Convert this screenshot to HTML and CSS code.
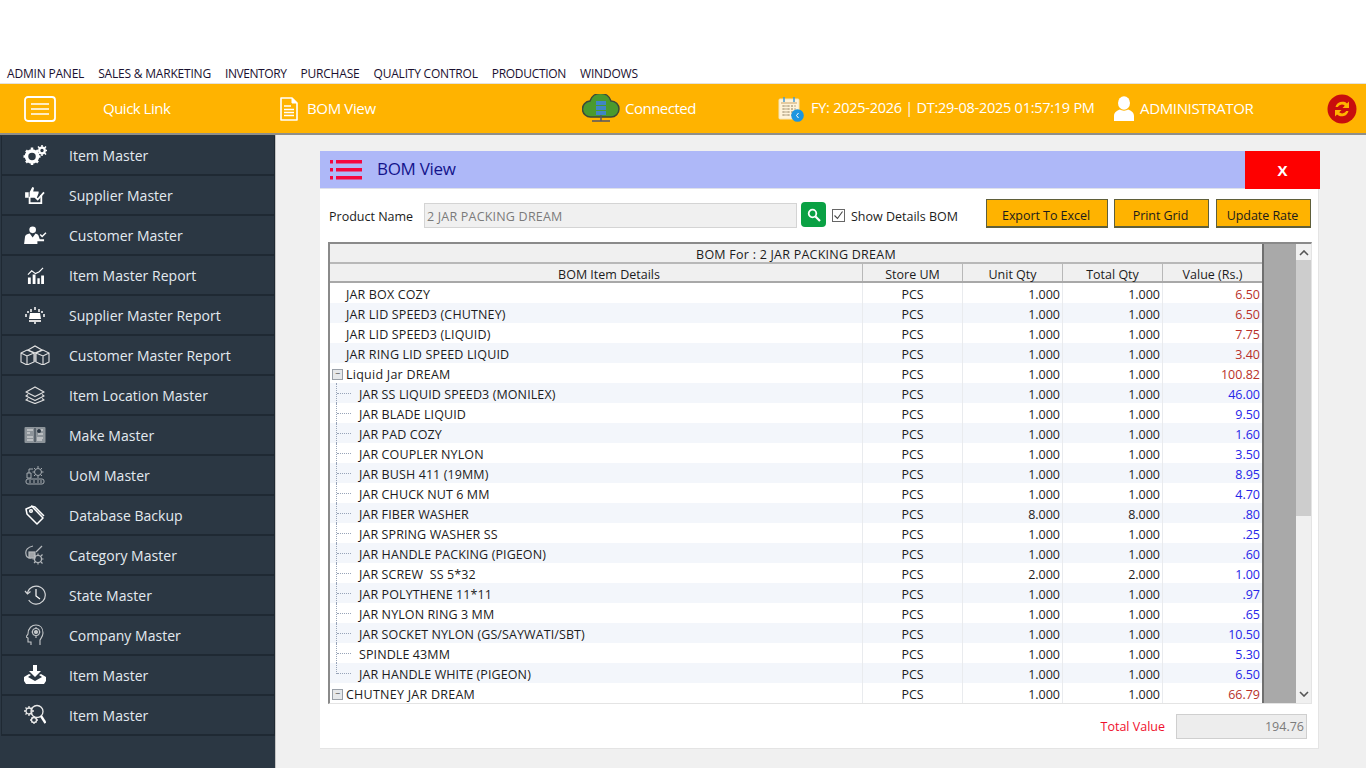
FILE: index.html
```html
<!DOCTYPE html>
<html lang="en">
<head>
<meta charset="utf-8">
<title>BOM View</title>
<link rel="stylesheet" href="styles.css">
</head>
<body>
<div class="top-space"></div>
<nav class="menubar">
  <span>ADMIN PANEL</span><span>SALES &amp; MARKETING</span><span class="m-inv">INVENTORY</span><span>PURCHASE</span><span>QUALITY CONTROL</span><span class="m-prod">PRODUCTION</span><span>WINDOWS</span>
</nav>
<header class="appbar">
  <div class="ab ab-menu">
    <svg class="i-menu" viewBox="0 0 32 26" width="32" height="26"><rect x="1" y="1" width="30" height="24" rx="3" fill="none" stroke="#fff" stroke-width="1.800"/><path d="M7 8h18M7 13h18M7 18h18" stroke="#fff" stroke-width="1.500"/></svg>
  </div>
  <div class="ab ab-quick"><span>Quick Link</span></div>
  <div class="ab ab-view">
    <svg viewBox="0 0 18 24" width="18" height="24"><path d="M1 1h11l5 5v17H1z" fill="none" stroke="#fff" stroke-width="1.600" stroke-linejoin="round"/><path d="M12 1v5h5" fill="#fff" stroke="#fff"/><path d="M4 9h7M4 12.500h10M4 15.500h10M4 18.500h10" stroke="#fff" stroke-width="1.500"/></svg>
    <span>BOM View</span>
  </div>
  <div class="ab ab-conn">
    <svg viewBox="0 0 38 30" width="38" height="30"><path d="M9 23a8 8 0 0 1-1-16 11 11 0 0 1 21 0 8 8 0 0 1 0 16z" fill="#4a9a2e" stroke="#3c4a38" stroke-width="1.500"/><rect x="14" y="7" width="10" height="4" fill="#3f86c6"/><rect x="14" y="12" width="10" height="4" fill="#3f86c6"/><rect x="14" y="17" width="10" height="4" fill="#3f86c6"/><path d="M19 21v6M10 27h18" stroke="#556" stroke-width="1.500"/></svg>
    <span>Connected</span>
  </div>
  <div class="ab ab-fy">
    <svg viewBox="0 0 26 26" width="26" height="26"><rect x="1" y="3" width="20" height="20" rx="1" fill="#fff3d8" stroke="#f3e3b8"/><path d="M6 1v5M16 1v5" stroke="#3f9ad8" stroke-width="1.500"/><path d="M3 7h16" stroke="#c9a36b" stroke-width="1"/><path d="M4 10h14M4 13h14M4 16h14M4 19h14M6 9v12M10 9v12M14 9v12" stroke="#b9a98a" stroke-width="1.200" stroke-dasharray="2 1"/><circle cx="19.500" cy="19.500" r="6.300" fill="#1d96e0"/><path d="M20.500 17l-2 2.500 2 2.500" stroke="#fff" fill="none"/></svg>
    <span>FY: 2025-2026 | DT:29-08-2025 01:57:19 PM</span>
  </div>
  <div class="ab ab-user">
    <svg viewBox="0 0 20 25" width="20" height="25"><ellipse cx="10" cy="7" rx="6" ry="6.800" fill="#fff"/><path d="M0 25v-5c0-4 4-6 6-6.500 2 1.500 6 1.500 8 0 2 .5 6 2.500 6 6.500v5z" fill="#fff"/></svg>
    <span>ADMINISTRATOR</span>
  </div>
  <div class="ab ab-refresh">
    <svg viewBox="0 0 30 30" width="30" height="30"><circle cx="15" cy="15" r="14.500" fill="#c80d0d"/><path d="M8.500 13a7 7 0 0 1 11.500-3.500l2-2v6.500h-6.500l2.300-2.300a4.500 4.500 0 0 0-7 1.300zM21.500 17a7 7 0 0 1-11.500 3.500l-2 2V16h6.500l-2.300 2.300a4.500 4.500 0 0 0 7-1.300z" fill="#ffb300"/></svg>
  </div>
</header>
<div class="body">
  <aside class="side">
    <a class="si"><span class="sic"><svg viewBox="0 0 24 20" width="24" height="20"><circle cx="9" cy="11.500" r="5.500" fill="none" stroke="#fff" stroke-width="3.500"/><path d="M9 2.500v3M9 17.500v3M.5 11.500h3M14.500 11.500h3M3 5.500l2 2M13 15.500l2 2M3 17.500l2-2M13 7.500l2-2" stroke="#fff" stroke-width="2.500"/><circle cx="19" cy="5.500" r="2.800" fill="none" stroke="#fff" stroke-width="2.200"/><path d="M19 0v2M19 9v2M13.500 5.500h2M22.500 5.500h1.500M15 1.500l1.500 1.500M21.500 8l1.500 1.500M15 9.500L16.500 8M21.500 3L23 1.500" stroke="#fff" stroke-width="1.500"/></svg></span>Item Master</a>
    <a class="si"><span class="sic"><svg viewBox="0 0 22 20" width="20" height="18"><path d="M0 7h4v6H0zM5 7l3-6 2 1-1 4h6v2l-2 5H5z" fill="#fff"/><path d="M5 12v7h13l0-9" fill="none" stroke="#fff" stroke-width="2"/><path d="M11 12l3 3 7-8" fill="none" stroke="#fff" stroke-width="2"/></svg></span>Supplier Master</a>
    <a class="si"><span class="sic"><svg viewBox="0 0 24 20" width="23" height="19"><circle cx="9" cy="4" r="3.500" fill="#fff"/><path d="M0 19l1-8c.5-2 4-3 5-3l3 4 3-4c2 .5 3 1 3.500 3l1 3H21v2h-7v3z" fill="#fff"/><path d="M17 9l2 2 4-4" stroke="#fff" stroke-width="1.500" fill="none"/></svg></span>Customer Master</a>
    <a class="si"><span class="sic"><svg viewBox="0 0 18 18" width="17" height="17"><path d="M1 11h3v7H1zM6 8h3v10H6zM11 12h2.500v6H11zM15 9h3v9h-3z" fill="#fff"/><path d="M1 8l4-4 4 3 4-2 4-4" fill="none" stroke="#fff" stroke-width="1.200"/></svg></span>Item Master Report</a>
    <a class="si"><span class="sic"><svg viewBox="0 0 20 18" width="20" height="18"><path d="M5 7h10l1 6H4z" fill="#fff"/><path d="M4 14h12v2H4z" fill="#ddd"/><path d="M10 1v3M6 3v3M14 3v3M1 8v3M19 8v3M10 16v2" stroke="#fff" stroke-width="1.500"/><circle cx="3" cy="6" r="1" fill="#fff"/><circle cx="17" cy="6" r="1" fill="#fff"/></svg></span>Supplier Master Report</a>
    <a class="si"><span class="sic"><svg viewBox="0 0 30 20" width="30" height="20" fill="none" stroke="#e4e4e4" stroke-width="1.100"><path d="M1 8l6-3 7 3v9l-7 3-6-3zM1 8l6 3 7-3M7 11v9"/><path d="M16 8l7-3 6 3v9l-6 3-7-3zM16 8l7 3 6-3M23 11v9"/><path d="M8 5l7-4 7 4-7 3zM15 8v9"/></svg></span>Customer Master Report</a>
    <a class="si"><span class="sic"><svg viewBox="0 0 20 18" width="20" height="18" fill="none" stroke="#ddd" stroke-width="1.300" stroke-linejoin="round"><path d="M10 1l9 5-9 4.500L1 6zM3 8.500L1 10l9 4.500 9-4.500-2-1.500M3 12.500L1 14l9 3.500 9-3.500-2-1.500"/></svg></span>Item Location Master</a>
    <a class="si"><span class="sic"><svg viewBox="0 0 22 18" width="22" height="18"><rect x=".5" y="1" width="21" height="16" rx="1" fill="#8d949a"/><path d="M11 2v14" stroke="#2b3743"/><path d="M3 4h6M3 7h3M13 4h6M14 8h5M3 11h6M3 14h6M13 12h6M13 14h5" stroke="#e8e8e8"/><circle cx="15" cy="5" r="2" fill="#2b3743"/></svg></span>Make Master</a>
    <a class="si"><span class="sic"><svg viewBox="0 0 20 20" width="20" height="20" fill="none" stroke="#a5abb0"><circle cx="13" cy="7" r="3.500"/><path d="M13 1v2M13 11v2M7.500 7h2M16.500 7h2M9 3l1.500 1.500M15.500 9.500L17 11M9 11l1.500-1.500M15.500 4.500L17 3"/><path d="M2 8h4v5H2zM4 8V4h4"/><rect x="1" y="14" width="18" height="5" rx="2"/><path d="M5 15v3M9 15v3M13 15v3M16 15v3"/></svg></span>UoM Master</a>
    <a class="si"><span class="sic"><svg viewBox="0 0 20 20" width="20" height="20" fill="none" stroke="#fff" stroke-width="1.500" stroke-linejoin="round"><path d="M1 4l6-2.500 11 11.500-6 6L2 9z"/><circle cx="6" cy="6" r="1.300"/><path d="M6 1l4 1 9 9"/></svg></span>Database Backup</a>
    <a class="si"><span class="sic"><svg viewBox="0 0 20 20" width="20" height="20" fill="none" stroke="#b5b9bd" stroke-width="1.200"><path d="M8 1C3 2 0 5 1 9c0 3 2 4 5 4"/><rect x="4" y="7" width="6" height="6" fill="#a0a4a8"/><circle cx="13" cy="14" r="3.500"/><path d="M13 8.500v2M13 17.500v2M7.500 14h2M16.500 14h2M9 10l1.500 1.500M16 17l1.500 1.500M9 18l1.500-1.500M16 11l1.500-1.500"/><path d="M11 7l6-6"/></svg></span>Category Master</a>
    <a class="si"><span class="sic"><svg viewBox="0 0 22 22" width="22" height="22" fill="none" stroke="#d4d6d8" stroke-width="1.200"><path d="M3.500 9a9 9 0 1 1 1.200 7"/><path d="M1 7l2.500 3L6.500 7.500"/><path d="M12 5v7l4 3" stroke="#fff"/></svg></span>State Master</a>
    <a class="si"><span class="sic"><svg viewBox="0 0 18 22" width="18" height="22" fill="none" stroke="#c5c8ca" stroke-width="1.100"><path d="M5 21v-3H2v-4l-2-1 2-3C2 4 6 1 10 1s7 3 7 8c0 3-2 5-3 7v5"/><circle cx="10" cy="8" r="3.500"/><circle cx="10" cy="8" r="1.500" fill="#c5c8ca"/><path d="M10 3v1.500M10 11.500V14M5.500 8H7M13 8h1.500"/></svg></span>Company Master</a>
    <a class="si"><span class="sic"><svg viewBox="0 0 22 20" width="22" height="20"><path d="M9 0h4v6h4l-6 6-6-6h4z" fill="#fff"/><path d="M5 9L0 12v4l2 3h18l2-3v-4l-5-3-2 1 3 2-7 4-7-4 3-2z" fill="#fff"/></svg></span>Item Master</a>
    <a class="si"><span class="sic"><svg viewBox="0 0 22 22" width="22" height="22" fill="none" stroke="#e8e8e8" stroke-width="1.300"><circle cx="13" cy="7.500" r="6"/><path d="M17 12l4.500 7" stroke="#fff" stroke-width="2.400"/><circle cx="5" cy="7" r="3"/><path d="M5 2v2M5 10v2M0 7h2M8 7h2M1.500 3.500L3 5M7 9l1.500 1.500M1.500 10.500L3 9M7 5l1.500-1.500"/><circle cx="10" cy="16" r="2.500"/><path d="M10 12v1.500M10 18.500V20M6 16h1.500M12.500 16H14M7.500 13.500l1 1M11.500 17.500l1 1M7.500 18.500l1-1M11.500 14.500l1-1"/></svg></span>Item Master</a>
  </aside>
  <main class="main">
    <section class="panel">
      <div class="titlebar">
        <svg class="ti" viewBox="0 0 32 22" width="32" height="22"><path d="M0 1h3v3.500H0zM6 1h26v3.500H6zM0 9h3v3.500H0zM6 9h26v3.500H6zM0 17h3v3.500H0zM6 17h26v3.500H6z" fill="#f5063e"/></svg>
        <h1>BOM View</h1>
        <button class="close">X</button>
      </div>
      <div class="tools">
        <label class="pl">Product Name</label>
        <div class="pinput">2 JAR PACKING DREAM</div>
        <button class="find"><svg viewBox="0 0 14 14" width="14" height="14" fill="none" stroke="#fff"><circle cx="5.500" cy="5.500" r="3.800" stroke-width="1.800"/><path d="M8.500 8.500l4.500 4.500" stroke-width="2.200"/></svg></button>
        <span class="chk"><svg viewBox="0 0 13 13" width="13" height="13"><rect x=".5" y=".5" width="12" height="12" fill="#fff" stroke="#666"/><path d="M2.500 6.500l3 3 5-7" fill="none" stroke="#444" stroke-width="1.100"/></svg></span>
        <span class="chl">Show Details BOM</span>
        <button class="btn b1">Export To Excel</button>
        <button class="btn b2">Print Grid</button>
        <button class="btn b3">Update Rate</button>
      </div>
      <div class="grid">
        <div class="gbody">
          <div class="ghead">BOM For : 2 JAR PACKING DREAM</div>
          <div class="row hdr"><div>BOM Item Details</div><div>Store UM</div><div>Unit Qty</div><div>Total Qty</div><div>Value (Rs.)</div></div>
          <div class="row"><div class="t0">JAR BOX COZY</div><div>PCS</div><div>1.000</div><div>1.000</div><div class="r">6.50</div></div>
          <div class="row"><div class="t0">JAR LID SPEED3 (CHUTNEY)</div><div>PCS</div><div>1.000</div><div>1.000</div><div class="r">6.50</div></div>
          <div class="row"><div class="t0">JAR LID SPEED3 (LIQUID)</div><div>PCS</div><div>1.000</div><div>1.000</div><div class="r">7.75</div></div>
          <div class="row"><div class="t0">JAR RING LID SPEED LIQUID</div><div>PCS</div><div>1.000</div><div>1.000</div><div class="r">3.40</div></div>
          <div class="row"><div class="t0 tp">Liquid Jar DREAM</div><div>PCS</div><div>1.000</div><div>1.000</div><div class="r">100.82</div></div>
          <div class="row"><div class="t1">JAR SS LIQUID SPEED3 (MONILEX)</div><div>PCS</div><div>1.000</div><div>1.000</div><div class="b">46.00</div></div>
          <div class="row"><div class="t1">JAR BLADE LIQUID</div><div>PCS</div><div>1.000</div><div>1.000</div><div class="b">9.50</div></div>
          <div class="row"><div class="t1">JAR PAD COZY</div><div>PCS</div><div>1.000</div><div>1.000</div><div class="b">1.60</div></div>
          <div class="row"><div class="t1">JAR COUPLER NYLON</div><div>PCS</div><div>1.000</div><div>1.000</div><div class="b">3.50</div></div>
          <div class="row"><div class="t1">JAR BUSH 411 (19MM)</div><div>PCS</div><div>1.000</div><div>1.000</div><div class="b">8.95</div></div>
          <div class="row"><div class="t1">JAR CHUCK NUT 6 MM</div><div>PCS</div><div>1.000</div><div>1.000</div><div class="b">4.70</div></div>
          <div class="row"><div class="t1">JAR FIBER WASHER</div><div>PCS</div><div>8.000</div><div>8.000</div><div class="b">.80</div></div>
          <div class="row"><div class="t1">JAR SPRING WASHER SS</div><div>PCS</div><div>1.000</div><div>1.000</div><div class="b">.25</div></div>
          <div class="row"><div class="t1">JAR HANDLE PACKING (PIGEON)</div><div>PCS</div><div>1.000</div><div>1.000</div><div class="b">.60</div></div>
          <div class="row"><div class="t1">JAR SCREW&nbsp; SS 5*32</div><div>PCS</div><div>2.000</div><div>2.000</div><div class="b">1.00</div></div>
          <div class="row"><div class="t1">JAR POLYTHENE 11*11</div><div>PCS</div><div>1.000</div><div>1.000</div><div class="b">.97</div></div>
          <div class="row"><div class="t1">JAR NYLON RING 3 MM</div><div>PCS</div><div>1.000</div><div>1.000</div><div class="b">.65</div></div>
          <div class="row"><div class="t1">JAR SOCKET NYLON (GS/SAYWATI/SBT)</div><div>PCS</div><div>1.000</div><div>1.000</div><div class="b">10.50</div></div>
          <div class="row"><div class="t1">SPINDLE 43MM</div><div>PCS</div><div>1.000</div><div>1.000</div><div class="b">5.30</div></div>
          <div class="row"><div class="t1 tl">JAR HANDLE WHITE (PIGEON)</div><div>PCS</div><div>1.000</div><div>1.000</div><div class="b">6.50</div></div>
          <div class="row"><div class="t0 tp">CHUTNEY JAR DREAM</div><div>PCS</div><div>1.000</div><div>1.000</div><div class="r">66.79</div></div>
        </div>
        <div class="gfill"></div>
        <div class="sbar">
          <svg viewBox="0 0 10 6" width="10" height="6"><path d="M1 5l4-4 4 4" fill="none" stroke="#555" stroke-width="1.600"/></svg>
          <div class="thumb"></div>
          <svg viewBox="0 0 10 6" width="10" height="6"><path d="M1 1l4 4 4-4" fill="none" stroke="#555" stroke-width="1.600"/></svg>
        </div>
      </div>
      <div class="total">
        <span class="tl-label">Total Value</span>
        <div class="tv">194.76</div>
      </div>
    </section>
  </main>
</div>
</body>
</html>
```
FILE: styles.css
```css
* { box-sizing: border-box; }
html, body { margin: 0; padding: 0; }
body { width: 1366px; height: 768px; overflow: hidden; background: #fff; font-family: "Open Sans", "Noto Sans", sans-serif; color: #1c1c1c; }
.top-space { height: 64px; }
.menubar { height: 19px; display: flex; gap: 14px; padding-left: 7px; align-items: center; font-size: 12px; letter-spacing: -0.2px; color: #1a1030; }
.m-inv { letter-spacing: -0.42px; }
.m-prod { letter-spacing: -0.3px; }
.appbar { height: 52px; background: #ffb300; border-top: 1px solid #e4e2dc; border-bottom: 2px solid #8f8f8a; display: flex; align-items: center; color: #fff; font-size: 15px; letter-spacing: -0.35px; }
.ab { display: flex; align-items: center; flex: none; }
.ab span { padding-bottom: 2px; }
.ab-menu { width: 103px; padding-left: 24px; }
.ab-quick { width: 177px; letter-spacing: -0.5px; }
.ab-view { width: 302px; gap: 9px; }
.ab-conn { width: 196px; gap: 5px; letter-spacing: -0.5px; }
.ab-fy { width: 336px; gap: 7px; font-size: 14.500px; letter-spacing: -0.26px; }
.ab-user { width: 213px; gap: 6px; }
.ab-refresh { width: 30px; }
.body { display: flex; height: 633px; }
.side { width: 276px; flex: none; background: #2b3743; border-right: 1px solid #c4c4c4; padding: 1px 0 0 1px; }
.si { display: flex; align-items: center; height: 40px; width: 274px; border-bottom: 2px solid #1f2933; border-right: 1px solid #1f2933; border-left: 1px solid #1f2933; color: #e3eaf0; font-size: 14px; letter-spacing: 0.03px; }
.sic { width: 67px; display: flex; justify-content: center; padding-right: 1px; flex: none; }
.main { flex: 1; background: #f0f0f0; padding: 16px 0 0 44px; }
.panel { width: 999px; height: 598px; background: #fff; border: 1px solid #e4e4e4; border-top: 0; border-left: 0; display: flex; flex-direction: column; }
.titlebar { width: 1000px; height: 38px; background: #aeb8f8; display: flex; align-items: center; padding-left: 10px; flex: none; border-bottom: 1px solid #dfe1ea; }
.ti { flex: none; }
.titlebar h1 { margin: 0 0 0 15px; padding-bottom: 2px; font-size: 17px; font-weight: 400; color: #14148c; letter-spacing: -0.3px; flex: 1; }
.close { width: 75px; height: 38px; border: 0; background: #fe0000; color: #fff; font: 700 15px "Open Sans", sans-serif; padding: 0; }
.tools { height: 53px; flex: none; display: flex; align-items: center; padding: 0 0 0 9px; font-size: 12.500px; }
.pl { width: 95px; flex: none; padding-top: 2px; }
.pinput { width: 373px; height: 25px; background: #f0f0f0; border: 1px solid #d4d4d4; color: #7b7b7b; line-height: 25px; padding-left: 2px; flex: none; letter-spacing: 0.2px; }
.find { width: 25px; height: 25px; margin: 0 0 2px 4px; background: #0aa144; border: 0; border-radius: 4px; padding: 0; display: flex; align-items: center; justify-content: center; flex: none; }
.chk { margin-left: 6px; display: flex; flex: none; }
.chl { margin-left: 6px; width: 135px; flex: none; padding-top: 2px; }
.btn { height: 29px; margin-bottom: 4px; background: #ffb300; border: 1px solid #5f5f3a; border-bottom-width: 2px; font: 12.500px "Open Sans", sans-serif; letter-spacing: -0.05px; color: #1c1c1c; padding: 4px 2px 0 0; flex: none; }
.b1 { width: 122px; }
.b2 { width: 95px; margin-left: 6px; }
.b3 { width: 95px; margin-left: 7px; }
.grid { margin-left: 8px; width: 984px; height: 462px; flex: none; display: flex; border: 1px solid #e4e4e4; border-top: 2px solid #8a8a8a; border-left: 2px solid #8a8a8a; overflow: hidden; }
.gbody { width: 934px; flex: none; font-size: 12.500px; border-right: 2px solid #6f6f6f; }
.ghead { height: 20px; line-height: 21px; background: #f0f0f0; border-bottom: 2px solid #b8b8b8; text-align: center; letter-spacing: 0.24px; }
.row { height: 20px; display: grid; grid-template-columns: 533px 100px 100px 100px 99px; line-height: 24px; background: #fff; }
.row:nth-child(even) { background: #f3f6fb; }
.row > div { border-right: 1px solid #e9ebee; text-align: center; position: relative; white-space: pre; height: 20px; }
.row > div:nth-child(3), .row > div:nth-child(4), .row > div:nth-child(5) { text-align: right; padding-right: 2px; }
.row > div:last-child { border-right: 0; }
.row.hdr { background: #f0f0f0; height: 19px; border-bottom: 2px solid #a8a8a8; line-height: 22px; }
.row.hdr > div { text-align: center; padding: 0; border-right: 1px solid #b8b8b8; height: 17px; }
.row.hdr > div:first-child { padding-left: 26px; }
.row.hdr > div:last-child { border-right: 0; }
.row > .t0 { text-align: left; padding-left: 16px; letter-spacing: 0.15px; }
.row > .t1 { text-align: left; padding-left: 29px; letter-spacing: 0.1px; }
.row > .tp { letter-spacing: 0.25px; }
.row > .r { color: #b8302a; }
.row > .b { color: #2525e8; }
.t1::before { content: ""; position: absolute; left: 6px; top: 0; height: 20px; border-left: 1px dotted #98a4b8; }
.t1::after { content: ""; position: absolute; left: 7px; top: 10px; width: 14px; border-top: 1px dotted #98a4b8; }
.tl::before { height: 11px; }
.tp::before { content: "\2212"; position: absolute; left: 2px; top: 6px; width: 9px; height: 9px; border: 1px solid #9aa0a8; background: #e6e8ea; font-size: 9px; line-height: 7px; text-align: center; color: #444; letter-spacing: 0; }
.gfill { width: 32px; flex: none; background: #a9a9a9; }
.sbar { width: 16px; flex: none; background: #f0f0f0; display: flex; flex-direction: column; align-items: center; justify-content: space-between; padding: 6px 0; position: relative; }
.thumb { position: absolute; left: 0; top: 16px; width: 16px; height: 256px; background: #cdcdcd; }
.total { flex: 1; display: flex; align-items: center; justify-content: flex-end; padding-right: 11px; gap: 11px; font-size: 12.500px; padding-top: 1px; }
.tl-label { color: #f0102e; }
.tv { width: 131px; height: 25px; background: #ededed; border: 1px solid #cfcfcf; color: #7b7b7b; text-align: right; padding-right: 2px; line-height: 23px; }
```
